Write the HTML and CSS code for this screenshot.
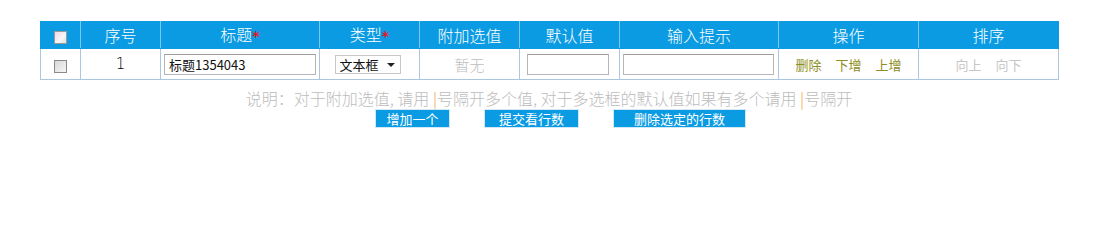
FILE: index.html
```html
<!DOCTYPE html>
<html>
<head>
<meta charset="utf-8">
<link rel="stylesheet" href="styles.css">
</head>
<body>
<div class="wrap">
  <table class="grid">
    <colgroup>
      <col class="c1"><col class="c2"><col class="c3"><col class="c4"><col class="c5"><col class="c6"><col class="c7"><col class="c8"><col class="c9">
    </colgroup>
    <thead>
      <tr>
        <th><span class="chk"></span></th>
        <th>序号</th>
        <th>标题<span class="req">*</span></th>
        <th>类型<span class="req">*</span></th>
        <th>附加选值</th>
        <th>默认值</th>
        <th>输入提示</th>
        <th>操作</th>
        <th>排序</th>
      </tr>
    </thead>
    <tbody>
      <tr>
        <td><span class="chk"></span></td>
        <td class="num">1</td>
        <td><span class="inp inp-title">标题1354043</span></td>
        <td><span class="sel">文本框<span class="arrow"></span></span></td>
        <td class="muted">暂无</td>
        <td><span class="inp inp-def"></span></td>
        <td><span class="inp inp-hint"></span></td>
        <td class="ops"><span>删除</span><span>下增</span><span>上增</span></td>
        <td class="sort"><span>向上</span><span>向下</span></td>
      </tr>
    </tbody>
  </table>
  <p class="note">说明：对于附加选值, 请用 <span class="bar">|</span>号隔开多个值, 对于多选框的默认值如果有多个请用 <span class="bar">|</span>号隔开</p>
  <div class="btns">
    <span class="btn b1">增加一个</span>
    <span class="btn b2">提交看行数</span>
    <span class="btn b3">删除选定的行数</span>
  </div>
</div>
</body>
</html>
```
FILE: styles.css
```css
html, body {
  margin: 0;
  padding: 0;
  background: #fff;
}
body {
  font-family: "Noto Sans CJK SC", "DejaVu Sans", sans-serif;
}
.wrap {
  padding: 21px 0 0 40px;
  width: 1018px;
}
.grid {
  border-collapse: collapse;
  table-layout: fixed;
  width: 1018px;
}
.c1 { width: 40px; }
.c2 { width: 80px; }
.c3 { width: 159px; }
.c4 { width: 100px; }
.c5 { width: 100px; }
.c6 { width: 100px; }
.c7 { width: 159px; }
.c8 { width: 140px; }
.c9 { width: 140px; }
.grid th {
  background: #0a9be3;
  color: #fff;
  font-weight: 300;
  font-size: 16px;
  line-height: 16px;
  height: 26px;
  padding: 0;
  border: 1px solid #0a9be3;
  border-left-color: #7cc7ee;
  border-right-color: #7cc7ee;
  text-align: center;
  vertical-align: middle;
}
.grid th:first-child { border-left-color: #0a9be3; }
.grid th:last-child { border-right-color: #0a9be3; }
.req { color: #e8141e; font-weight: bold; font-family: "DejaVu Sans", sans-serif; font-size: 14px; }
.grid td {
  height: 30px;
  padding: 0;
  border: 1px solid #a9c7e0;
  text-align: center;
  vertical-align: middle;
  font-size: 14px;
  color: #111;
}
.chk {
  display: inline-block;
  width: 11px;
  height: 11px;
  border: 1px solid #8a8a8a;
  background: linear-gradient(135deg, #d8d8d8, #f6f6f6);
  vertical-align: middle;
  box-sizing: content-box;
}
thead .chk {
  border-color: #9a9a9a;
  background: linear-gradient(135deg, #f0d8e8, #f6f6f6 60%, #e0e0e0);
}
.grid td.num { font-family: "DejaVu Sans", sans-serif; font-size: 15px; font-weight: 300; color: #000; }
.inp {
  display: block;
  height: 19px;
  border: 1px solid #b5b5b5;
  border-top-color: #9c9c9c;
  background: #fff;
  box-sizing: content-box;
  text-align: left;
  font-size: 13px;
  line-height: 19px;
  padding: 0 4px;
  color: #111;
}
.inp-title { width: 142px; margin-left: 3px; }
.inp-def { width: 72px; margin-left: 7px; }
.inp-hint { width: 141px; margin-left: 3px; }
.sel {
  display: inline-flex;
  align-items: center;
  height: 17px;
  border: 1px solid #c8c8c8;
  padding: 0 5px 0 3px;
  font-size: 13px;
  line-height: 17px;
  color: #111;
  margin-left: -3px;
}
.arrow {
  display: inline-block;
  width: 0;
  height: 0;
  border-left: 4px solid transparent;
  border-right: 4px solid transparent;
  border-top: 4px solid #222;
  margin-left: 8px;
}
.grid td.muted { color: #bdbdbd; font-size: 15px; font-weight: 300; }
.ops span {
  color: #8e8e22;
  font-size: 13px;
  margin: 0 7px;
}
.sort span {
  color: #c6c6c6;
  font-size: 13px;
  margin: 0 7px;
}
.note {
  margin: 8px 0 0 0;
  text-align: center;
  font-size: 16px;
  font-weight: 300;
  line-height: 20px;
  color: #bcbcbc;
}
.bar { color: #f29a3c; }
.btns {
  display: flex;
  padding-left: 335px;
  margin-top: 1px;
}
.btn {
  display: inline-block;
  background: #0a9be3;
  color: #fff;
  font-size: 13px;
  line-height: 17px;
  height: 17px;
  border: 1px solid #cfe9f7;
  text-align: center;
}
.b1 { width: 73px; }
.b2 { width: 93px; margin-left: 34px; }
.b3 { width: 131px; margin-left: 34px; }
```
